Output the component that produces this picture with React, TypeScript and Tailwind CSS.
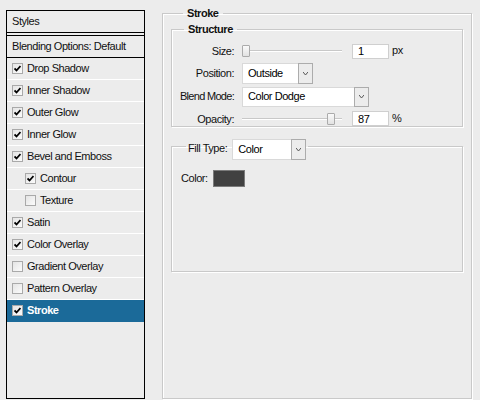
import React from 'react';

const FONT = "font-['Liberation_Sans',Arial,sans-serif]";

const styles = [
  { label: 'Drop Shadow', on: true },
  { label: 'Inner Shadow', on: true },
  { label: 'Outer Glow', on: true },
  { label: 'Inner Glow', on: true },
  { label: 'Bevel and Emboss', on: true },
  { label: 'Contour', on: true, sub: true },
  { label: 'Texture', on: false, sub: true },
  { label: 'Satin', on: true },
  { label: 'Color Overlay', on: true },
  { label: 'Gradient Overlay', on: false },
  { label: 'Pattern Overlay', on: false },
  { label: 'Stroke', on: true, active: true },
];

function Check({ on }: { on: boolean }) {
  return (
    <span className="w-[11px] h-[11px] border border-[#a9a9a9] bg-gradient-to-br from-[#e4e4e4] to-[#fbfbfb] flex items-center justify-center shrink-0">
      {on && (
        <svg width="7" height="7" viewBox="0 0 7 7">
          <path d="M0.5 3.5 L2.5 5.5 L6.5 1" fill="none" stroke="#000" strokeWidth="1.8" />
        </svg>
      )}
    </span>
  );
}

function Chevron() {
  return (
    <span className="w-[15px] h-full border border-[#acacac] bg-[#ececec] flex items-center justify-center shrink-0">
      <svg width="5" height="3" viewBox="0 0 5 3">
        <path d="M0 0 L2.5 3 L5 0" fill="none" stroke="#555" strokeWidth="1" />
      </svg>
    </span>
  );
}

function Select({ value, width, height }: { value: string; width: string; height: string }) {
  return (
    <div className={`flex ${width} ${height}`}>
      <div className="flex-1 bg-white border-y border-l border-[#d9d9d9] pl-[5px] flex items-center text-[11px] text-black">
        {value}
      </div>
      <Chevron />
    </div>
  );
}

function Slider({ pos }: { pos: number }) {
  return (
    <div className="relative w-[100px] h-[12px] flex items-center">
      <div className="w-full h-[2px] border-t border-[#c8c8c8] border-b border-b-white" />
      <span
        className="absolute top-0 w-[8px] h-[12px] border border-[#ababab] rounded-[1px] bg-gradient-to-b from-[#fafafa] to-[#e2e2e2]"
        style={{ left: pos }}
      />
    </div>
  );
}

function NumInput({ value }: { value: string }) {
  return (
    <div className="w-[37px] h-[15px] bg-white border border-[#cfcfcf] pl-[5px] flex items-center text-[11px] text-black">
      {value}
    </div>
  );
}

export default function App() {
  return (
    <div className={`w-[480px] h-[400px] bg-[#ececec] flex ${FONT} text-[11px] tracking-[-0.45px] text-[#111] overflow-hidden`}>
      {/* Styles list */}
      <div className="ml-[6px] mt-[10px] w-[139px] h-[389px] border border-black flex flex-col">
        <div className="h-[22px] flex items-center pl-[5px] border-b border-black">Styles</div>
        <div className="h-[23px] flex items-center pl-[5px] border-y border-black mt-[2px]">Blending Options: Default</div>
        {styles.map((s) => (
          <div
            key={s.label}
            className={`h-[22px] flex items-center gap-[4px] border-b ${
              s.active ? 'bg-[#1b6a99] text-white font-bold border-[#1b6a99]' : 'border-white'
            } ${s.sub ? 'pl-[18px]' : 'pl-[5px]'}`}
          >
            <Check on={s.on} />
            <span>{s.label}</span>
          </div>
        ))}
      </div>

      {/* Stroke options */}
      <div className="ml-[17px] pt-[7px] w-[310px]">
        <fieldset className="h-[392px] border border-[#c9c9c9] shadow-[inset_1px_1px_0_#fff,1px_1px_0_#fff] px-[8px]">
          <legend className="ml-[12px] px-[4px] font-bold leading-[13px]">Stroke</legend>

          <fieldset className="mt-[3px] h-[104px] border border-[#c9c9c9] shadow-[inset_1px_1px_0_#fff,1px_1px_0_#fff]">
            <legend className="ml-[12px] px-[4px] font-bold leading-[13px]">Structure</legend>
            <div className="grid grid-cols-[62px_auto] gap-x-[8px] items-center pt-[7px]">
              <span className="text-right">Size:</span>
              <div className="flex items-center gap-[10px] h-[16px]">
                <Slider pos={0} />
                <NumInput value="1" />
                <span className="-ml-[7px] -mt-[2px]">px</span>
              </div>

              <span className="text-right mt-[3px]">Position:</span>
              <div className="mt-[3px]">
                <Select value="Outside" width="w-[71px]" height="h-[21px]" />
              </div>

              <span className="text-right mt-[3px] tracking-[-0.7px]">Blend Mode:</span>
              <div className="mt-[3px]">
                <Select value="Color Dodge" width="w-[127px]" height="h-[20px]" />
              </div>

              <span className="text-right mt-[4px]">Opacity:</span>
              <div className="flex items-center gap-[10px] h-[15px] mt-[4px]">
                <Slider pos={85} />
                <NumInput value="87" />
                <span className="-ml-[7px] -mt-[2px]">%</span>
              </div>
            </div>
          </fieldset>

          <fieldset className="mt-[5px] h-[140px] border border-[#c9c9c9] shadow-[inset_1px_1px_0_#fff,1px_1px_0_#fff] px-[9px]">
            <legend className="ml-[5px] px-[2px] pt-[7px] flex items-center gap-[5px]">
              <span className="-mt-[2px]">Fill Type:</span>
              <Select value="Color" width="w-[74px]" height="h-[21px]" />
            </legend>
            <div className="flex items-center gap-[5px] mt-[10px]">
              <span>Color:</span>
              <span className="w-[32px] h-[17px] bg-[#414141] border border-[#7b7b7b]" />
            </div>
          </fieldset>
        </fieldset>
      </div>
    </div>
  );
}
